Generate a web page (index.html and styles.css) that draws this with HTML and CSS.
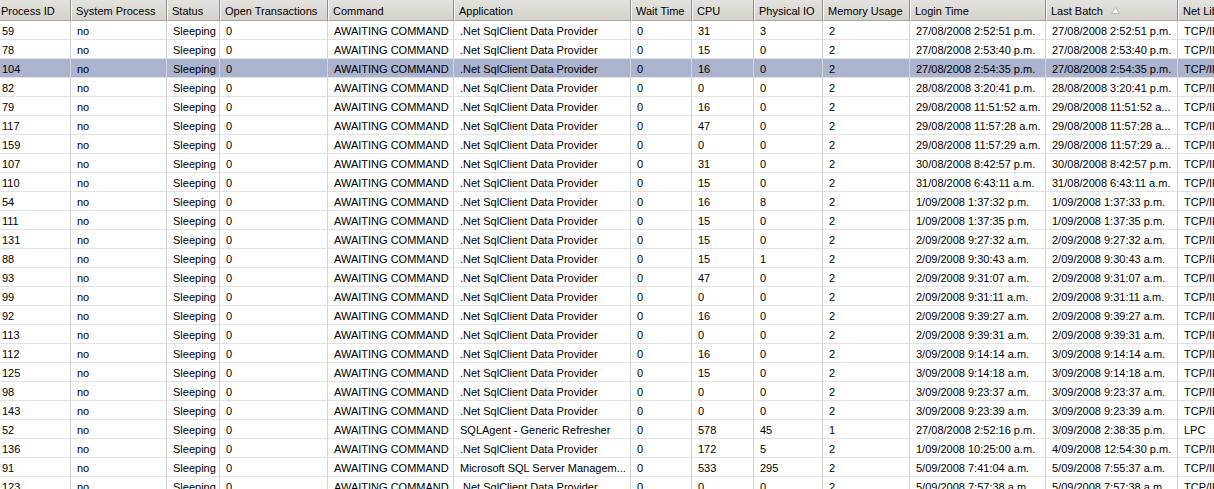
FILE: index.html
```html
<!DOCTYPE html>
<html>
<head>
<meta charset="utf-8">
<link rel="stylesheet" href="styles.css">
</head>
<body>
<div class="view">
  <div class="grid">
    <div class="row head">
      <div class="cell">Process ID</div><div class="cell">System Process</div><div class="cell">Status</div><div class="cell">Open Transactions</div><div class="cell">Command</div><div class="cell">Application</div><div class="cell">Wait Time</div><div class="cell">CPU</div><div class="cell">Physical IO</div><div class="cell">Memory Usage</div><div class="cell">Login Time</div><div class="cell">Last Batch <svg class="sort" width="9" height="7" viewBox="0 0 9 7"><path d="M4.5 0.5 L8.5 6.5 L0.5 6.5 Z" fill="#f4f4f4" stroke="#b8b8b8" stroke-width="1"/></svg></div><div class="cell">Net Library</div>
    </div>
    <div class="row"><div class="cell">59</div><div class="cell">no</div><div class="cell">Sleeping</div><div class="cell">0</div><div class="cell">AWAITING COMMAND</div><div class="cell">.Net SqlClient Data Provider</div><div class="cell">0</div><div class="cell">31</div><div class="cell">3</div><div class="cell">2</div><div class="cell">27/08/2008 2:52:51 p.m.</div><div class="cell">27/08/2008 2:52:51 p.m.</div><div class="cell">TCP/IP</div></div>
    <div class="row"><div class="cell">78</div><div class="cell">no</div><div class="cell">Sleeping</div><div class="cell">0</div><div class="cell">AWAITING COMMAND</div><div class="cell">.Net SqlClient Data Provider</div><div class="cell">0</div><div class="cell">15</div><div class="cell">0</div><div class="cell">2</div><div class="cell">27/08/2008 2:53:40 p.m.</div><div class="cell">27/08/2008 2:53:40 p.m.</div><div class="cell">TCP/IP</div></div>
    <div class="row sel"><div class="cell">104</div><div class="cell">no</div><div class="cell">Sleeping</div><div class="cell">0</div><div class="cell">AWAITING COMMAND</div><div class="cell">.Net SqlClient Data Provider</div><div class="cell">0</div><div class="cell">16</div><div class="cell">0</div><div class="cell">2</div><div class="cell">27/08/2008 2:54:35 p.m.</div><div class="cell">27/08/2008 2:54:35 p.m.</div><div class="cell">TCP/IP</div></div>
    <div class="row"><div class="cell">82</div><div class="cell">no</div><div class="cell">Sleeping</div><div class="cell">0</div><div class="cell">AWAITING COMMAND</div><div class="cell">.Net SqlClient Data Provider</div><div class="cell">0</div><div class="cell">0</div><div class="cell">0</div><div class="cell">2</div><div class="cell">28/08/2008 3:20:41 p.m.</div><div class="cell">28/08/2008 3:20:41 p.m.</div><div class="cell">TCP/IP</div></div>
    <div class="row"><div class="cell">79</div><div class="cell">no</div><div class="cell">Sleeping</div><div class="cell">0</div><div class="cell">AWAITING COMMAND</div><div class="cell">.Net SqlClient Data Provider</div><div class="cell">0</div><div class="cell">16</div><div class="cell">0</div><div class="cell">2</div><div class="cell">29/08/2008 11:51:52 a.m.</div><div class="cell">29/08/2008 11:51:52 a...</div><div class="cell">TCP/IP</div></div>
    <div class="row"><div class="cell">117</div><div class="cell">no</div><div class="cell">Sleeping</div><div class="cell">0</div><div class="cell">AWAITING COMMAND</div><div class="cell">.Net SqlClient Data Provider</div><div class="cell">0</div><div class="cell">47</div><div class="cell">0</div><div class="cell">2</div><div class="cell">29/08/2008 11:57:28 a.m.</div><div class="cell">29/08/2008 11:57:28 a...</div><div class="cell">TCP/IP</div></div>
    <div class="row"><div class="cell">159</div><div class="cell">no</div><div class="cell">Sleeping</div><div class="cell">0</div><div class="cell">AWAITING COMMAND</div><div class="cell">.Net SqlClient Data Provider</div><div class="cell">0</div><div class="cell">0</div><div class="cell">0</div><div class="cell">2</div><div class="cell">29/08/2008 11:57:29 a.m.</div><div class="cell">29/08/2008 11:57:29 a...</div><div class="cell">TCP/IP</div></div>
    <div class="row"><div class="cell">107</div><div class="cell">no</div><div class="cell">Sleeping</div><div class="cell">0</div><div class="cell">AWAITING COMMAND</div><div class="cell">.Net SqlClient Data Provider</div><div class="cell">0</div><div class="cell">31</div><div class="cell">0</div><div class="cell">2</div><div class="cell">30/08/2008 8:42:57 p.m.</div><div class="cell">30/08/2008 8:42:57 p.m.</div><div class="cell">TCP/IP</div></div>
    <div class="row"><div class="cell">110</div><div class="cell">no</div><div class="cell">Sleeping</div><div class="cell">0</div><div class="cell">AWAITING COMMAND</div><div class="cell">.Net SqlClient Data Provider</div><div class="cell">0</div><div class="cell">15</div><div class="cell">0</div><div class="cell">2</div><div class="cell">31/08/2008 6:43:11 a.m.</div><div class="cell">31/08/2008 6:43:11 a.m.</div><div class="cell">TCP/IP</div></div>
    <div class="row"><div class="cell">54</div><div class="cell">no</div><div class="cell">Sleeping</div><div class="cell">0</div><div class="cell">AWAITING COMMAND</div><div class="cell">.Net SqlClient Data Provider</div><div class="cell">0</div><div class="cell">16</div><div class="cell">8</div><div class="cell">2</div><div class="cell">1/09/2008 1:37:32 p.m.</div><div class="cell">1/09/2008 1:37:33 p.m.</div><div class="cell">TCP/IP</div></div>
    <div class="row"><div class="cell">111</div><div class="cell">no</div><div class="cell">Sleeping</div><div class="cell">0</div><div class="cell">AWAITING COMMAND</div><div class="cell">.Net SqlClient Data Provider</div><div class="cell">0</div><div class="cell">15</div><div class="cell">0</div><div class="cell">2</div><div class="cell">1/09/2008 1:37:35 p.m.</div><div class="cell">1/09/2008 1:37:35 p.m.</div><div class="cell">TCP/IP</div></div>
    <div class="row"><div class="cell">131</div><div class="cell">no</div><div class="cell">Sleeping</div><div class="cell">0</div><div class="cell">AWAITING COMMAND</div><div class="cell">.Net SqlClient Data Provider</div><div class="cell">0</div><div class="cell">15</div><div class="cell">0</div><div class="cell">2</div><div class="cell">2/09/2008 9:27:32 a.m.</div><div class="cell">2/09/2008 9:27:32 a.m.</div><div class="cell">TCP/IP</div></div>
    <div class="row"><div class="cell">88</div><div class="cell">no</div><div class="cell">Sleeping</div><div class="cell">0</div><div class="cell">AWAITING COMMAND</div><div class="cell">.Net SqlClient Data Provider</div><div class="cell">0</div><div class="cell">15</div><div class="cell">1</div><div class="cell">2</div><div class="cell">2/09/2008 9:30:43 a.m.</div><div class="cell">2/09/2008 9:30:43 a.m.</div><div class="cell">TCP/IP</div></div>
    <div class="row"><div class="cell">93</div><div class="cell">no</div><div class="cell">Sleeping</div><div class="cell">0</div><div class="cell">AWAITING COMMAND</div><div class="cell">.Net SqlClient Data Provider</div><div class="cell">0</div><div class="cell">47</div><div class="cell">0</div><div class="cell">2</div><div class="cell">2/09/2008 9:31:07 a.m.</div><div class="cell">2/09/2008 9:31:07 a.m.</div><div class="cell">TCP/IP</div></div>
    <div class="row"><div class="cell">99</div><div class="cell">no</div><div class="cell">Sleeping</div><div class="cell">0</div><div class="cell">AWAITING COMMAND</div><div class="cell">.Net SqlClient Data Provider</div><div class="cell">0</div><div class="cell">0</div><div class="cell">0</div><div class="cell">2</div><div class="cell">2/09/2008 9:31:11 a.m.</div><div class="cell">2/09/2008 9:31:11 a.m.</div><div class="cell">TCP/IP</div></div>
    <div class="row"><div class="cell">92</div><div class="cell">no</div><div class="cell">Sleeping</div><div class="cell">0</div><div class="cell">AWAITING COMMAND</div><div class="cell">.Net SqlClient Data Provider</div><div class="cell">0</div><div class="cell">16</div><div class="cell">0</div><div class="cell">2</div><div class="cell">2/09/2008 9:39:27 a.m.</div><div class="cell">2/09/2008 9:39:27 a.m.</div><div class="cell">TCP/IP</div></div>
    <div class="row"><div class="cell">113</div><div class="cell">no</div><div class="cell">Sleeping</div><div class="cell">0</div><div class="cell">AWAITING COMMAND</div><div class="cell">.Net SqlClient Data Provider</div><div class="cell">0</div><div class="cell">0</div><div class="cell">0</div><div class="cell">2</div><div class="cell">2/09/2008 9:39:31 a.m.</div><div class="cell">2/09/2008 9:39:31 a.m.</div><div class="cell">TCP/IP</div></div>
    <div class="row"><div class="cell">112</div><div class="cell">no</div><div class="cell">Sleeping</div><div class="cell">0</div><div class="cell">AWAITING COMMAND</div><div class="cell">.Net SqlClient Data Provider</div><div class="cell">0</div><div class="cell">16</div><div class="cell">0</div><div class="cell">2</div><div class="cell">3/09/2008 9:14:14 a.m.</div><div class="cell">3/09/2008 9:14:14 a.m.</div><div class="cell">TCP/IP</div></div>
    <div class="row"><div class="cell">125</div><div class="cell">no</div><div class="cell">Sleeping</div><div class="cell">0</div><div class="cell">AWAITING COMMAND</div><div class="cell">.Net SqlClient Data Provider</div><div class="cell">0</div><div class="cell">15</div><div class="cell">0</div><div class="cell">2</div><div class="cell">3/09/2008 9:14:18 a.m.</div><div class="cell">3/09/2008 9:14:18 a.m.</div><div class="cell">TCP/IP</div></div>
    <div class="row"><div class="cell">98</div><div class="cell">no</div><div class="cell">Sleeping</div><div class="cell">0</div><div class="cell">AWAITING COMMAND</div><div class="cell">.Net SqlClient Data Provider</div><div class="cell">0</div><div class="cell">0</div><div class="cell">0</div><div class="cell">2</div><div class="cell">3/09/2008 9:23:37 a.m.</div><div class="cell">3/09/2008 9:23:37 a.m.</div><div class="cell">TCP/IP</div></div>
    <div class="row"><div class="cell">143</div><div class="cell">no</div><div class="cell">Sleeping</div><div class="cell">0</div><div class="cell">AWAITING COMMAND</div><div class="cell">.Net SqlClient Data Provider</div><div class="cell">0</div><div class="cell">0</div><div class="cell">0</div><div class="cell">2</div><div class="cell">3/09/2008 9:23:39 a.m.</div><div class="cell">3/09/2008 9:23:39 a.m.</div><div class="cell">TCP/IP</div></div>
    <div class="row"><div class="cell">52</div><div class="cell">no</div><div class="cell">Sleeping</div><div class="cell">0</div><div class="cell">AWAITING COMMAND</div><div class="cell">SQLAgent - Generic Refresher</div><div class="cell">0</div><div class="cell">578</div><div class="cell">45</div><div class="cell">1</div><div class="cell">27/08/2008 2:52:16 p.m.</div><div class="cell">3/09/2008 2:38:35 p.m.</div><div class="cell">LPC</div></div>
    <div class="row"><div class="cell">136</div><div class="cell">no</div><div class="cell">Sleeping</div><div class="cell">0</div><div class="cell">AWAITING COMMAND</div><div class="cell">.Net SqlClient Data Provider</div><div class="cell">0</div><div class="cell">172</div><div class="cell">5</div><div class="cell">2</div><div class="cell">1/09/2008 10:25:00 a.m.</div><div class="cell">4/09/2008 12:54:30 p.m.</div><div class="cell">TCP/IP</div></div>
    <div class="row"><div class="cell">91</div><div class="cell">no</div><div class="cell">Sleeping</div><div class="cell">0</div><div class="cell">AWAITING COMMAND</div><div class="cell">Microsoft SQL Server Managem...</div><div class="cell">0</div><div class="cell">533</div><div class="cell">295</div><div class="cell">2</div><div class="cell">5/09/2008 7:41:04 a.m.</div><div class="cell">5/09/2008 7:55:37 a.m.</div><div class="cell">TCP/IP</div></div>
    <div class="row"><div class="cell">123</div><div class="cell">no</div><div class="cell">Sleeping</div><div class="cell">0</div><div class="cell">AWAITING COMMAND</div><div class="cell">.Net SqlClient Data Provider</div><div class="cell">0</div><div class="cell">0</div><div class="cell">0</div><div class="cell">2</div><div class="cell">5/09/2008 7:57:38 a.m.</div><div class="cell">5/09/2008 7:57:38 a.m.</div><div class="cell">TCP/IP</div></div>
  </div>
</div>
</body>
</html>
```
FILE: styles.css
```css
html, body {
  margin: 0;
  padding: 0;
  background: #ffffff;
}
.view {
  width: 1214px;
  height: 489px;
  overflow: hidden;
  background: #ffffff;
}
.grid {
  margin-left: -4px;
  width: 1320px;
  font-family: "Liberation Sans", Arial, sans-serif;
  font-size: 11px;
  color: #000;
}
.row {
  display: grid;
  grid-template-columns: 75px 96px 53px 108px 126px 177px 61px 62px 69px 87px 136px 132px 100px;
  height: 19px;
}
.cell {
  box-sizing: border-box;
  height: 19px;
  padding-top: 2px;
  line-height: 16px;
  padding-left: 6px;
  border-right: 1px solid #d4d4d4;
  border-bottom: 1px solid #e2e2e2;
  white-space: nowrap;
  overflow: hidden;
}
.row.sel .cell {
  background: #abb3cf;
}
.row.head {
  height: 21px;
}
.row.head .cell {
  height: 21px;
  padding-top: 2px;
  line-height: 18px;
  padding-left: 4px;
  background: linear-gradient(#e4e2dd, #d5d2cc);
  border-left: 1px solid #f8f8f8;
  border-right: 1px solid #8e8e8e;
  border-bottom: 1px solid #a8a59f;
  color: #000;
}
.sort {
  margin-left: 5px;
  vertical-align: 1px;
}
```
